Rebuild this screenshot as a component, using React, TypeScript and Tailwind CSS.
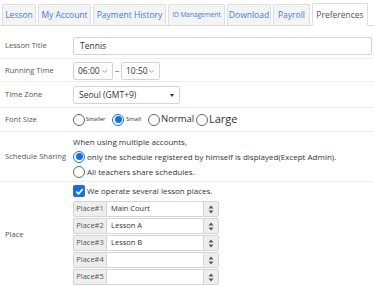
import { ChevronDown } from 'lucide-react'

const TABS = [
  { label: 'Lesson', w: 'w-[34px]' },
  { label: 'My Account', w: 'w-[53px]' },
  { label: 'Payment History', w: 'w-[73px]' },
  { label: 'ID Management', w: 'w-[57px]', small: true },
  { label: 'Download', w: 'w-[44px]' },
  { label: 'Payroll', w: 'w-[37px]' },
]

const PLACES = ['Main Court', 'Lesson A', 'Lesson B', '', '']

function Radio({ checked }: { checked?: boolean }) {
  return (
    <span
      className={`w-[12px] h-[12px] rounded-full flex items-center justify-center shrink-0 bg-white ${
        checked ? 'border-[1.5px] border-[#1a6fe0]' : 'border border-[#666]'
      }`}
    >
      {checked && <span className="w-[7px] h-[7px] rounded-full bg-[#1a6fe0]" />}
    </span>
  )
}

function Row({ label, children, className = '' }: { label: string; children: React.ReactNode; className?: string }) {
  return (
    <div className={`flex items-center border-b border-[#ededed] ${className}`}>
      <div className="w-[73px] pl-[5px] text-[#555] text-[7.6px] shrink-0">{label}</div>
      <div className="flex-1 min-w-0">{children}</div>
    </div>
  )
}

function UpDown() {
  return (
    <svg width="6" height="9" viewBox="0 0 6 9">
      <path d="M3 0.5 L5.5 3.5 L0.5 3.5 Z" fill="#555" />
      <path d="M3 8.5 L5.5 5.5 L0.5 5.5 Z" fill="#555" />
    </svg>
  )
}

export default function App() {
  return (
    <div className="w-[374px] h-[287px] bg-white overflow-hidden text-[8px] text-[#333]" style={{ fontFamily: '"Open Sans", sans-serif' }}>
      {/* tabs */}
      <div className="flex items-end gap-[2px] pl-[2px] pt-[3px] border-b border-[#ddd] h-[26px]">
        {TABS.map(t => (
          <div
            key={t.label}
            className={`${t.w} h-[21px] flex items-center justify-center bg-[#f4f4f4] border border-b-0 border-[#dedede] rounded-t-[2px] text-[#3b7be0] whitespace-nowrap ${t.small ? 'text-[6.5px]' : 'text-[8.5px]'}`}
          >
            {t.label}
          </div>
        ))}
        <div className="w-[56px] h-[23px] -mb-px flex items-center justify-center bg-white border border-b-0 border-[#dedede] rounded-t-[2px] text-[#555] text-[8.5px]">
          Preferences
        </div>
      </div>

      <div className="mt-[8px]">
        <Row label="Lesson Title" className="pt-[3px] pb-[3px]">
          <div className="h-[18px] mr-[2px] border border-[#d4d4d4] rounded-[2px] flex items-center px-[6px] text-[8.5px]">Tennis</div>
        </Row>

        <Row label="Running Time" className="pt-[3px] pb-[1px]">
          <div className="flex items-center">
            <div className="w-[40px] h-[18px] border border-[#d4d4d4] rounded-[2px] flex items-center justify-between px-[4px] text-[8.5px]">
              06:00 <ChevronDown size={7} strokeWidth={2} className="text-[#555]" />
            </div>
            <span className="w-[8px] text-center">~</span>
            <div className="w-[39px] h-[18px] border border-[#d4d4d4] rounded-[2px] flex items-center justify-between px-[4px] text-[8.5px]">
              10:50 <ChevronDown size={7} strokeWidth={2} className="text-[#555]" />
            </div>
          </div>
        </Row>

        <Row label="Time Zone" className="pt-[4px] pb-[3px]">
          <div className="w-[107px] h-[18px] border border-[#d4d4d4] rounded-[2px] flex items-center justify-between px-[5px] text-[8.5px]">
            Seoul (GMT+9)
            <span className="w-0 h-0 border-l-[2.5px] border-r-[2.5px] border-t-[3px] border-l-transparent border-r-transparent border-t-[#333]" />
          </div>
        </Row>

        <Row label="Font Size" className="h-[24px]">
          <div className="flex items-center">
            <Radio />
            <span className="text-[5.5px] ml-[1px] w-[26px]">Smaller</span>
            <Radio checked />
            <span className="text-[6px] ml-[2px] w-[22px]">Small</span>
            <Radio />
            <span className="text-[9.5px] ml-[1px] w-[35px]">Normal</span>
            <Radio />
            <span className="text-[11px] ml-[1px] font-medium">Large</span>
          </div>
        </Row>

        <Row label="Schedule Sharing" className="pt-[3px] pb-[3px]">
          <div className="flex flex-col gap-[2px] text-[8px]">
            <div className="h-[13px] flex items-center">When using multiple accounts,</div>
            <div className="h-[13px] flex items-center gap-[2px]">
              <Radio checked />
              <span>only the schedule registered by himself is displayed(Except Admin).</span>
            </div>
            <div className="h-[13px] flex items-center gap-[2px]">
              <Radio />
              <span>All teachers share schedules.</span>
            </div>
          </div>
        </Row>

        <Row label="Place" className="pt-[2px] border-b-0">
          <div className="flex flex-col gap-[1px]">
            <div className="h-[14px] mb-[2px] flex items-center gap-[2px] text-[8px]">
              <span className="w-[12px] h-[12px] rounded-[2px] bg-[#1a6fe0] flex items-center justify-center">
                <svg width="9" height="9" viewBox="0 0 10 10">
                  <path d="M1.5 5.2 L4 7.6 L8.6 2.4" stroke="white" strokeWidth="1.8" fill="none" />
                </svg>
              </span>
              We operate several lesson places.
            </div>
            {PLACES.map((p, i) => (
              <div key={i} className="flex h-[16px] w-[146px] text-[7.5px]">
                <div className="w-[34px] bg-[#eee] border border-[#d4d4d4] rounded-l-[2px] flex items-center justify-center text-[#555]">
                  Place#{i + 1}
                </div>
                <div className="flex-1 border-y border-[#d4d4d4] flex items-center px-[4px]">{p}</div>
                <div className="w-[16px] bg-[#eee] border border-[#d4d4d4] rounded-r-[2px] flex items-center justify-center">
                  <UpDown />
                </div>
              </div>
            ))}
          </div>
        </Row>
      </div>
    </div>
  )
}
